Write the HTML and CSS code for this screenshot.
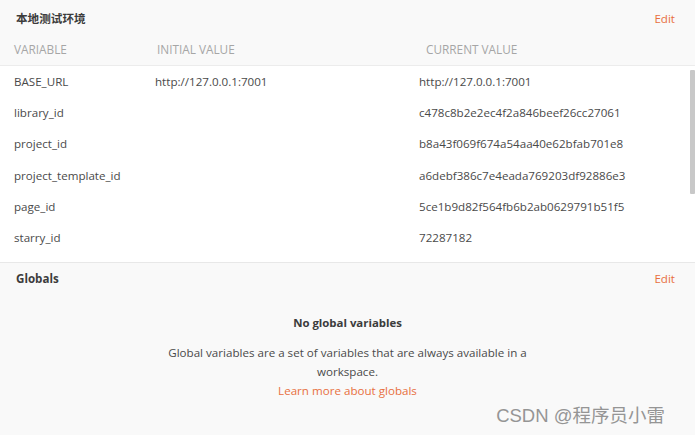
FILE: index.html
```html
<!DOCTYPE html>
<html lang="zh">
<head>
<meta charset="utf-8">
<link rel="stylesheet" href="styles.css">
</head>
<body>
<div class="page">
  <section class="env">
    <div class="env-head">
      <span class="title">本地测试环境</span>
      <a class="edit">Edit</a>
    </div>
    <div class="cols">
      <span class="c1">VARIABLE</span>
      <span class="c2">INITIAL VALUE</span>
      <span class="c3">CURRENT VALUE</span>
    </div>
    <div class="body">
      <div class="rows">
        <div class="row"><span class="c1">BASE_URL</span><span class="c2">http://127.0.0.1:7001</span><span class="c3">http://127.0.0.1:7001</span></div>
        <div class="row"><span class="c1">library_id</span><span class="c2"></span><span class="c3">c478c8b2e2ec4f2a846beef26cc27061</span></div>
        <div class="row"><span class="c1">project_id</span><span class="c2"></span><span class="c3">b8a43f069f674a54aa40e62bfab701e8</span></div>
        <div class="row"><span class="c1">project_template_id</span><span class="c2"></span><span class="c3">a6debf386c7e4eada769203df92886e3</span></div>
        <div class="row"><span class="c1">page_id</span><span class="c2"></span><span class="c3">5ce1b9d82f564fb6b2ab0629791b51f5</span></div>
        <div class="row"><span class="c1">starry_id</span><span class="c2"></span><span class="c3">72287182</span></div>
      </div>
      <div class="scrollbar"><div class="thumb"></div></div>
    </div>
  </section>
  <section class="globals">
    <div class="env-head">
      <span class="title">Globals</span>
      <a class="edit">Edit</a>
    </div>
    <div class="empty">
      <div class="empty-title">No global variables</div>
      <p class="empty-text">Global variables are a set of variables that are always available in a workspace.</p>
      <a class="learn">Learn more about globals</a>
    </div>
    <div class="watermark">CSDN @程序员小雷</div>
  </section>
</div>
</body>
</html>
```

FILE: styles.css
```css
* { box-sizing: border-box; }
html, body { margin: 0; padding: 0; background: #ffffff; }
body {
  font-family: "Open Sans", "Noto Sans CJK SC", sans-serif;
  font-size: 11.6px;
  color: #4a4a4a;
  width: 699px;
  height: 435px;
  overflow: hidden;
}
.page { width: 695px; height: 435px; display: flex; flex-direction: column; }
.env { background: #f9f9f9; }
.env-head {
  height: 36px;
  display: flex;
  align-items: center;
  justify-content: space-between;
  padding: 0 16px 0 16px;
}
.title { font-weight: 700; font-size: 11.6px; color: #3c3c3c; }
.edit { color: #e8703f; font-size: 11.6px; padding-right: 4px; }
.cols {
  height: 30px;
  display: flex;
  align-items: center;
  padding-left: 14px;
  padding-bottom: 4px;
  color: #a6a6a6;
  font-size: 11.8px;
  border-bottom: 1px solid #ececec;
}
.cols .c1 { width: 143px; }
.cols .c2 { width: 269px; }
.body { display: flex; background: #ffffff; height: 196px; }
.rows { flex: 1; }
.row { height: 31.2px; display: flex; align-items: center; padding-left: 14px; }
.row .c1 { width: 141px; }
.row .c2 { width: 264px; }
.scrollbar { width: 5px; padding-top: 4px; }
.thumb { width: 5px; height: 124px; background: #c8c8c8; border-radius: 1px; }
.globals {
  flex: 1;
  background: #f9f9f9;
  border-top: 1px solid #e8e8e8;
  position: relative;
}
.globals .env-head { height: 30px; }
.empty {
  display: flex;
  flex-direction: column;
  align-items: center;
  text-align: center;
  padding-top: 22px;
}
.empty-title { font-weight: 700; color: #3c3c3c; font-size: 11.4px; line-height: 16px; }
.empty-text { margin: 12px 0 0; width: 376px; line-height: 19px; }
.learn { color: #e8703f; line-height: 19px; }
.watermark {
  position: absolute;
  right: 30px;
  bottom: 8px;
  font-family: "Liberation Sans", "Noto Sans CJK SC", sans-serif;
  font-size: 18.5px;
  color: #959595;
}
```
